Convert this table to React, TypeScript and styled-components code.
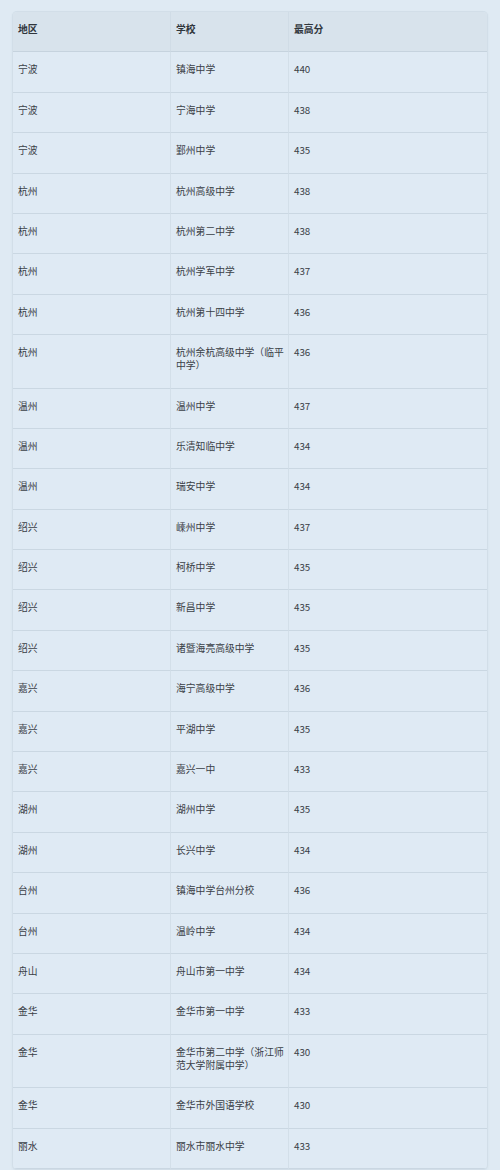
import React from "react";
import styled, { createGlobalStyle } from "styled-components";

const Global = createGlobalStyle`
  html, body { margin: 0; padding: 0; background: #dfeaf3; }
  body { font-family: "Noto Sans CJK SC", "Noto Sans", sans-serif; }
`;

const Page = styled.div`
  padding: 12px 13px 0 13px;
  background: #dfeaf3;
  min-height: 1170px;
  box-sizing: border-box;
`;

const Table = styled.table`
  width: 474px;
  table-layout: fixed;
  border-collapse: separate;
  border-spacing: 0;
  background: #dfeaf4;
  border-radius: 4px;
  box-shadow: 0 0 0 1px #d2dee8, 0 1px 3px rgba(60, 90, 120, 0.12);
  overflow: hidden;
`;

const HeadCell = styled.th`
  text-align: left;
  vertical-align: top;
  font-size: 9.8px;
  font-weight: 700;
  color: #30363c;
  line-height: 13px;
  padding: 11px 3px 15.4px 5px;
  background: #d8e3ec;
  border-bottom: 1px solid #c6d3de;
  border-right: 1px solid #d0dce6;
  &:last-child { border-right: none; }
`;

const Cell = styled.td`
  vertical-align: top;
  font-size: 9.8px;
  color: #3a4046;
  line-height: 13px;
  padding: 11px 3px 15.4px 5px;
  border-bottom: 1px solid #cad7e2;
  border-right: 1px solid #d3dfe9;
  &:last-child { border-right: none; }
`;

const rows: [string, string, string][] = [
  ["宁波", "镇海中学", "440"],
  ["宁波", "宁海中学", "438"],
  ["宁波", "鄞州中学", "435"],
  ["杭州", "杭州高级中学", "438"],
  ["杭州", "杭州第二中学", "438"],
  ["杭州", "杭州学军中学", "437"],
  ["杭州", "杭州第十四中学", "436"],
  ["杭州", "杭州余杭高级中学（临平中学）", "436"],
  ["温州", "温州中学", "437"],
  ["温州", "乐清知临中学", "434"],
  ["温州", "瑞安中学", "434"],
  ["绍兴", "嵊州中学", "437"],
  ["绍兴", "柯桥中学", "435"],
  ["绍兴", "新昌中学", "435"],
  ["绍兴", "诸暨海亮高级中学", "435"],
  ["嘉兴", "海宁高级中学", "436"],
  ["嘉兴", "平湖中学", "435"],
  ["嘉兴", "嘉兴一中", "433"],
  ["湖州", "湖州中学", "435"],
  ["湖州", "长兴中学", "434"],
  ["台州", "镇海中学台州分校", "436"],
  ["台州", "温岭中学", "434"],
  ["舟山", "舟山市第一中学", "434"],
  ["金华", "金华市第一中学", "433"],
  ["金华", "金华市第二中学（浙江师范大学附属中学）", "430"],
  ["金华", "金华市外国语学校", "430"],
  ["丽水", "丽水市丽水中学", "433"],
];

export default function App() {
  return (
    <>
      <Global />
      <Page>
        <Table>
          <colgroup>
            <col style={{ width: "158px" }} />
            <col style={{ width: "118px" }} />
            <col style={{ width: "198px" }} />
          </colgroup>
          <thead>
            <tr>
              <HeadCell>地区</HeadCell>
              <HeadCell>学校</HeadCell>
              <HeadCell>最高分</HeadCell>
            </tr>
          </thead>
          <tbody>
            {rows.map((r, i) => (
              <tr key={i}>
                <Cell>{r[0]}</Cell>
                <Cell>{r[1]}</Cell>
                <Cell>{r[2]}</Cell>
              </tr>
            ))}
          </tbody>
        </Table>
      </Page>
    </>
  );
}
